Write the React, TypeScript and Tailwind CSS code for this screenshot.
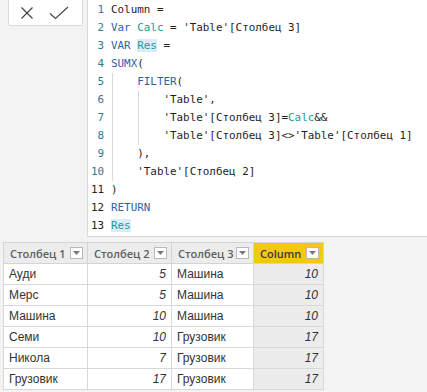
import { ReactNode } from "react";

type Tok = { t: string; c?: "kw" | "var" | "hl" };

const code: Tok[][] = [
  [{ t: "Column =" }],
  [{ t: "Var", c: "kw" }, { t: " " }, { t: "Calc", c: "var" }, { t: " = 'Table'[Столбец 3]" }],
  [{ t: "VAR", c: "kw" }, { t: " " }, { t: "Res", c: "hl" }, { t: " =" }],
  [{ t: "SUMX", c: "kw" }, { t: "(" }],
  [{ t: "    " }, { t: "FILTER", c: "kw" }, { t: "(" }],
  [{ t: "        'Table'," }],
  [{ t: "        'Table'[Столбец 3]=" }, { t: "Calc", c: "var" }, { t: "&&" }],
  [{ t: "        'Table'[Столбец 3]<>'Table'[Столбец 1]" }],
  [{ t: "    )," }],
  [{ t: "    'Table'[Столбец 2]" }],
  [{ t: ")" }],
  [{ t: "RETURN", c: "kw" }],
  [{ t: "Res", c: "hl" }],
];

const rows = [
  ["Ауди", "5", "Машина", "10"],
  ["Мерс", "5", "Машина", "10"],
  ["Машина", "10", "Машина", "10"],
  ["Семи", "10", "Грузовик", "17"],
  ["Никола", "7", "Грузовик", "17"],
  ["Грузовик", "17", "Грузовик", "17"],
];

function Tk({ tok }: { tok: Tok }) {
  if (tok.c === "kw") return <span className="text-[#2f5fa8]">{tok.t}</span>;
  if (tok.c === "var") return <span className="text-[#1b9a9a]">{tok.t}</span>;
  if (tok.c === "hl") return <span className="bg-[#dcecf7] text-[#1b9a9a]">{tok.t}</span>;
  return <span>{tok.t}</span>;
}

function FilterBox() {
  return (
    <span className="flex h-[12px] w-[13px] shrink-0 items-center justify-center border border-[#b9b9b9] bg-white">
      <svg width="7" height="4" viewBox="0 0 7 4">
        <path d="M0 0 H7 L3.5 4 Z" fill="#7a7a7a" />
      </svg>
    </span>
  );
}

function Th({ children, yellow }: { children: ReactNode; yellow?: boolean }) {
  return (
    <th
      className={
        "h-[21px] whitespace-nowrap border border-[#d4d4d4] py-0 pl-[6px] pr-[4px] text-left text-[11px] font-semibold " +
        (yellow ? "bg-[#f2c811] text-[#3a3a3a]" : "bg-[#ececec] text-[#5e5e5e]")
      }
      style={{ fontFamily: "'Open Sans', 'Noto Sans', sans-serif" }}
    >
      <div className="flex items-center justify-between">
        <span>{children}</span>
        <FilterBox />
      </div>
    </th>
  );
}

export default function App() {
  return (
    <div className="h-[392px] w-[427px] overflow-hidden bg-[#f3f3f3]">
      {/* formula bar */}
      <div className="flex h-[237px]">
        <div className="w-[87px] shrink-0 pl-[8px] pr-[4px]">
          <div className="flex h-[26px] items-center gap-[15px] rounded-b-[2px] border border-t-0 border-[#dadada] bg-white pl-[11px]">
            <svg width="14" height="14" viewBox="0 0 14 14">
              <path d="M1.5 1.5 L12.5 12.5 M12.5 1.5 L1.5 12.5" stroke="#444" strokeWidth="1.2" fill="none" />
            </svg>
            <svg width="20" height="14" viewBox="0 0 20 14">
              <path d="M1 7.5 L6.5 12.5 L19 1" stroke="#444" strokeWidth="1.2" fill="none" />
            </svg>
          </div>
        </div>
        <div
          className="relative flex-1 border-b border-l border-[#d8d8d8] bg-white pt-[1px] text-[10.9px] leading-[18px] text-[#1e1e1e]"
          style={{ fontFamily: "'DejaVu Sans Mono', monospace" }}
        >
          {code.map((line, i) => (
            <div key={i} className="flex h-[18px] whitespace-pre">
              <span className={"w-[16px] shrink-0 text-right " + (i >= 10 ? "text-[#222]" : "text-[#2b7e91]")}>
                {i + 1}
              </span>
              <span className="pl-[7px]">
                {line.map((tok, j) => (
                  <Tk key={j} tok={tok} />
                ))}
              </span>
            </div>
          ))}
          <div className="absolute left-[24px] top-[73px] h-[108px] w-px bg-[#d9d9d9]" />
          <div className="absolute left-[50px] top-[91px] h-[54px] w-px bg-[#d9d9d9]" />
        </div>
      </div>

      {/* table */}
      <div className="pl-[3px] pt-[5px]">
        <table
          className="w-[320px] table-fixed border-collapse text-[12px] leading-[19px] text-[#333]"
          style={{ fontFamily: "'Liberation Sans', Arial, sans-serif" }}
        >
          <colgroup>
            <col className="w-[84px]" />
            <col className="w-[84px]" />
            <col className="w-[82px]" />
            <col className="w-[70px]" />
          </colgroup>
          <thead>
            <tr>
              <Th>Столбец 1</Th>
              <Th>Столбец 2</Th>
              <Th>Столбец 3</Th>
              <Th yellow>Column</Th>
            </tr>
          </thead>
          <tbody>
            {rows.map((r, i) => (
              <tr key={i} className="h-[21px]">
                <td className="whitespace-nowrap border border-[#d8d8d8] bg-white px-[5px] py-0">{r[0]}</td>
                <td className="border border-[#d8d8d8] bg-white px-[5px] py-0 text-right italic">{r[1]}</td>
                <td className="whitespace-nowrap border border-[#d8d8d8] bg-white px-[5px] py-0">{r[2]}</td>
                <td className="border border-[#d8d8d8] bg-[#ececec] px-[5px] py-0 text-right italic">{r[3]}</td>
              </tr>
            ))}
          </tbody>
        </table>
      </div>
    </div>
  );
}
